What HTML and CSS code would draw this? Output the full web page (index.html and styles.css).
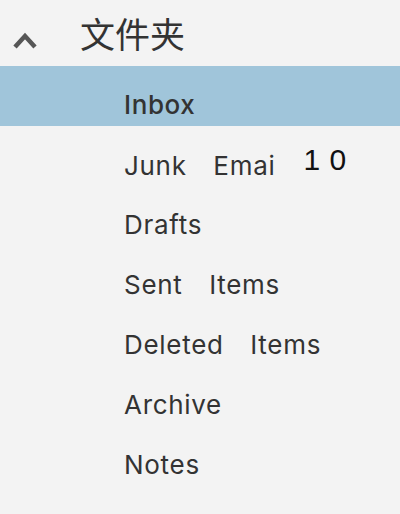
FILE: index.html
```html
<!DOCTYPE html>
<html lang="zh-CN">
<head>
<meta charset="utf-8">
<link rel="stylesheet" href="styles.css">
</head>
<body>
<nav class="folders">
  <div class="folders-head">
    <svg class="chevron" width="26" height="20" viewBox="0 0 26 20" aria-hidden="true">
      <path d="M3 17 L13 6 L23 17" fill="none" stroke="#565656" stroke-width="4.5" stroke-linejoin="miter"/>
    </svg>
    <span class="folders-title">文件夹</span>
  </div>
  <ul class="folder-list">
    <li class="folder selected">Inbox</li>
    <li class="folder">Junk　Emai<span class="badge">1 0</span></li>
    <li class="folder">Drafts</li>
    <li class="folder">Sent　Items</li>
    <li class="folder">Deleted　Items</li>
    <li class="folder">Archive</li>
    <li class="folder">Notes</li>
  </ul>
</nav>
</body>
</html>
```
FILE: styles.css
```css
html, body {
  margin: 0;
  padding: 0;
  background: #f3f3f3;
}
.folders {
  font-family: "Inter", "Noto Sans CJK SC", sans-serif;
  color: #333;
}
.folders-head {
  height: 66px;
  display: flex;
  align-items: flex-start;
}
.chevron {
  display: block;
  margin-left: 12px;
  margin-top: 30px;
}
.folders-title {
  font-family: "Noto Sans CJK SC", sans-serif;
  font-size: 35px;
  margin-left: 42px;
  margin-top: 13px;
  line-height: 40px;
  color: #333;
}
.folder-list {
  list-style: none;
  margin: 0;
  padding: 0;
}
.folder {
  height: 60px;
  box-sizing: border-box;
  padding: 24px 0 6px 124px;
  font-size: 26px;
  line-height: 30px;
  letter-spacing: 0.7px;
  white-space: pre;
}
.folder.selected {
  background: #a0c5da;
  font-weight: 500;
  letter-spacing: 0.6px;
}
.badge {
  font-family: "Liberation Sans", sans-serif;
  font-size: 30px;
  color: #111;
  margin-left: 28px;
  letter-spacing: 0.5px;
  position: relative;
  top: -5px;
}
```
